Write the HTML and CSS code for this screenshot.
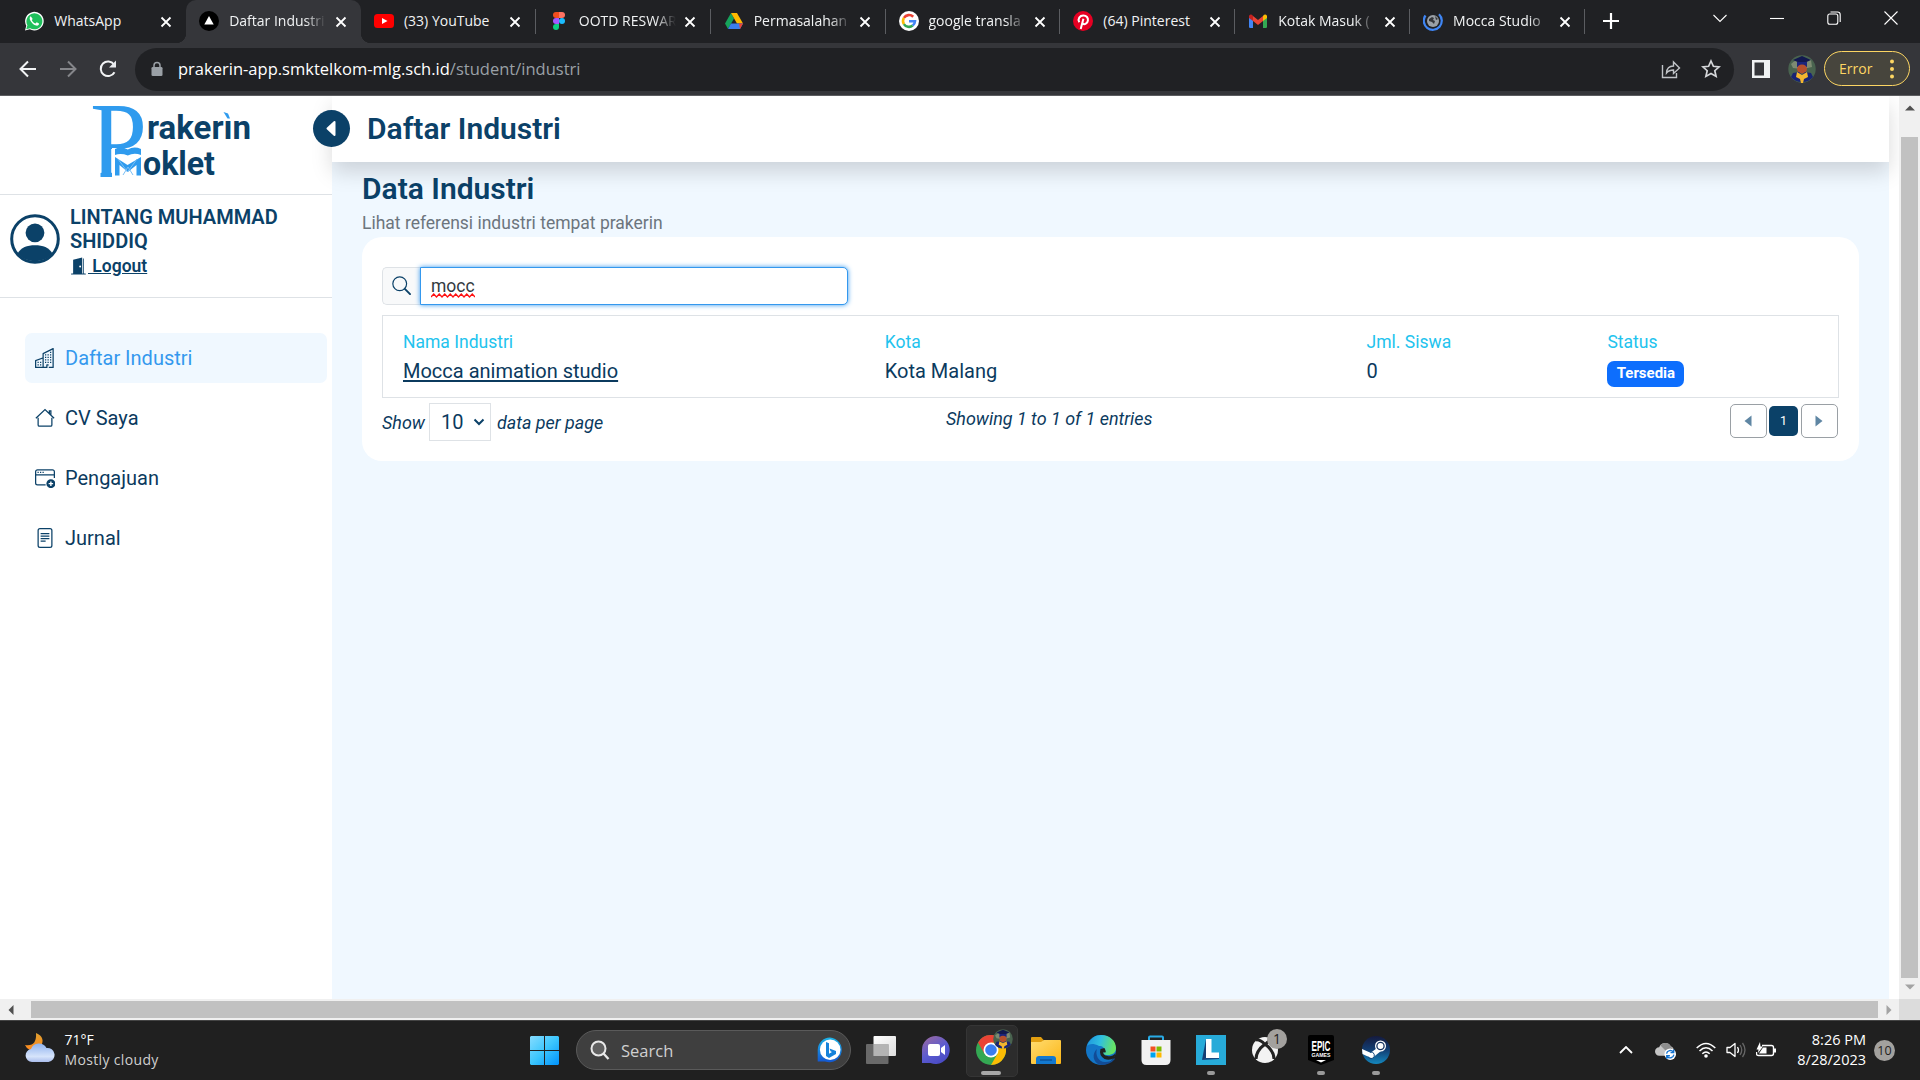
FILE: index.html
```html
<!DOCTYPE html>
<html lang="id">
<head>
<meta charset="utf-8">
<title>Daftar Industri</title>
<link rel="stylesheet" href="styles.css">
</head>
<body>
<div class="screen">

<header class="tabstrip">
  <div class="tab">
    <svg class="fav" viewBox="0 0 20 20"><path d="M1 19.5l1.3-4.8A9.3 9.3 0 1 1 5.800 18.200z" fill="#fff"/><path d="M2.200 18.300l1.200-4A8 8 0 1 1 6.200 17.200z" fill="#20c05c"/><path d="M6.800 5.200c-1.500.8-1.400 2.700-.2 4.700 1.400 2.300 3.200 4 5.600 4.700 1.600.4 2.900-.6 2.800-2.100l-2.300-1.200-1.200 1.300c-1.700-.6-3-1.900-3.700-3.500l.9-1.200z" fill="#fff"/></svg>
    <span class="tab-title">WhatsApp</span><svg class="x" viewBox="0 0 12 12"><path d="M1.500 1.500l9 9M10.500 1.500l-9 9"/></svg>
  </div>
  <div class="tab active">
    <svg class="fav" viewBox="0 0 20 20"><circle cx="10" cy="10" r="10" fill="#000"/><path d="M10 5l4.700 8.500H5.300z" fill="#fff"/></svg>
    <span class="tab-title">Daftar Industri</span><svg class="x" viewBox="0 0 12 12"><path d="M1.500 1.500l9 9M10.500 1.500l-9 9"/></svg>
  </div>
  <div class="tab sep">
    <svg class="fav" viewBox="0 0 20 20"><rect y="3" width="20" height="14" rx="3.500" fill="#f00"/><path d="M8 7l5.500 3L8 13z" fill="#fff"/></svg>
    <span class="tab-title">(33) YouTube</span><svg class="x" viewBox="0 0 12 12"><path d="M1.500 1.500l9 9M10.500 1.500l-9 9"/></svg>
  </div>
  <div class="tab sep">
    <svg class="fav" viewBox="0 0 20 20"><path d="M10 1H7a3 3 0 0 0 0 6h3z" fill="#f24e1e"/><path d="M10 1h3a3 3 0 0 1 0 6h-3z" fill="#ff7262"/><path d="M10 7H7a3 3 0 0 0 0 6h3z" fill="#a259ff"/><circle cx="13" cy="10" r="3" fill="#1abcfe"/><path d="M10 13H7a3 3 0 1 0 3 3z" fill="#0acf83"/></svg>
    <span class="tab-title">OOTD RESWAR</span><svg class="x" viewBox="0 0 12 12"><path d="M1.500 1.500l9 9M10.500 1.500l-9 9"/></svg>
  </div>
  <div class="tab sep">
    <svg class="fav" viewBox="0 0 20 20"><path d="M7 2L1 12.500 4 18l6-10.500z" fill="#16a35b"/><path d="M7 2h6l6 10.500h-6z" fill="#ffba00"/><path d="M4 18l3-5.500h12L16 18z" fill="#3b7ded"/><path d="M15 12.500h4L16 18z" fill="#ea4335"/></svg>
    <span class="tab-title">Permasalahan</span><svg class="x" viewBox="0 0 12 12"><path d="M1.500 1.500l9 9M10.500 1.500l-9 9"/></svg>
  </div>
  <div class="tab sep">
    <svg class="fav" viewBox="0 0 20 20"><circle cx="10" cy="10" r="10" fill="#fff"/><g fill="none" stroke-width="2.600"><path d="M14.200 5.800A6 6 0 0 0 4.900 6.900" stroke="#ea4335"/><path d="M4.900 6.900a6 6 0 0 0 0 6.200" stroke="#fbbc05"/><path d="M4.900 13.100a6 6 0 0 0 8.800 1.500" stroke="#34a853"/><path d="M10 10.200h6a6 6 0 0 1-2.300 4.400" stroke="#4285f4"/></g></svg>
    <span class="tab-title">google transla</span><svg class="x" viewBox="0 0 12 12"><path d="M1.500 1.500l9 9M10.500 1.500l-9 9"/></svg>
  </div>
  <div class="tab sep">
    <svg class="fav" viewBox="0 0 20 20"><circle cx="10" cy="10" r="10" fill="#e60023"/><path d="M6.300 11.200C4.300 7.800 6.800 4.600 10.300 4.600c3.300 0 5 2.200 4.600 4.900-.4 2.900-3.400 4.800-5.300 2.800M10.400 7.700L7.700 18" fill="none" stroke="#fff" stroke-width="2"/></svg>
    <span class="tab-title">(64) Pinterest</span><svg class="x" viewBox="0 0 12 12"><path d="M1.500 1.500l9 9M10.500 1.500l-9 9"/></svg>
  </div>
  <div class="tab sep">
    <svg class="fav" viewBox="0 0 20 20"><path d="M1 5h4v12H2.200Q1 17 1 16z" fill="#4285f4"/><path d="M15 5h4v11q0 1-1.200 1H15z" fill="#34a853"/><path d="M5 5l5 4 5-4v5l-5 4-5-4z" fill="#ea4335"/><path d="M1 5q.5-2.300 3-1.200L5 5v5L1 7z" fill="#c5221f"/><path d="M19 5q-.5-2.300-3-1.200L15 5v5l4-3z" fill="#fbbc04"/></svg>
    <span class="tab-title">Kotak Masuk (</span><svg class="x" viewBox="0 0 12 12"><path d="M1.500 1.500l9 9M10.500 1.500l-9 9"/></svg>
  </div>
  <div class="tab sep">
    <svg class="fav" viewBox="0 0 20 20"><circle cx="10" cy="10" r="6" fill="#9aa0a6"/><path d="M6 8l3-2 2 1-1 2 2 1-1 3-2-2-3-1zM12 5l3 3-2 1z" fill="#34363a"/><path d="M2.500 4.500A9 9 0 1 0 16 3.300" fill="none" stroke="#3f86f5" stroke-width="2.200"/></svg>
    <span class="tab-title">Mocca Studio</span><svg class="x" viewBox="0 0 12 12"><path d="M1.500 1.500l9 9M10.500 1.500l-9 9"/></svg>
  </div>
  <svg class="newtab" viewBox="0 0 16 16"><path d="M8 0v16M0 8h16" stroke="#fff" stroke-width="2.200"/></svg>
  <div class="winctl">
    <svg viewBox="0 0 14 14"><path d="M.5 4L7 10.500 13.500 4"/></svg>
    <svg viewBox="0 0 14 14"><path d="M0 7.500h14"/></svg>
    <svg viewBox="0 0 14 14"><rect x=".8" y="3" width="10" height="10.200" rx="2"/><path d="M3.500 1h7q2.700 0 2.700 2.700V11"/></svg>
    <svg viewBox="0 0 14 14"><path d="M.5.500l13 13M13.500.500l-13 13"/></svg>
  </div>
</header>

<div class="toolbar">
  <div class="navbtns">
    <svg viewBox="0 0 20 20"><path d="M18 10H3M10 2.500L2.500 10l7.500 7.500"/></svg>
    <svg class="dim" viewBox="0 0 20 20"><path d="M2 10h15M10 2.500l7.500 7.500-7.500 7.500"/></svg>
    <svg viewBox="0 0 20 20"><path d="M16.500 13.200A7.300 7.300 0 1 1 16 5.500"/><path d="M18 1.500v7h-7z" fill="#e8eaed" stroke="none"/></svg>
  </div>
  <div class="omnibox">
    <svg class="lock" viewBox="0 0 12 15"><rect x=".5" y="5.500" width="11" height="9" rx="1.300" fill="#9aa0a6"/><path d="M3 6V4a3 3 0 0 1 6 0v2" fill="none" stroke="#9aa0a6" stroke-width="1.500"/></svg>
    <span class="url">prakerin-app.smktelkom-mlg.sch.id<span>/student/industri</span></span>
    <svg class="ob" viewBox="0 0 20 20"><path d="M1.500 6v12.500h14V14M5.500 14c.3-5 3-7 7-7V3l6 6-6 5.500V11c-3 0-5 .5-7 3z" fill="none" stroke="#c0c3c7" stroke-width="1.400"/></svg>
    <svg class="ob" viewBox="0 0 20 20"><path d="M10 2l2.400 5.300 5.700.6-4.300 3.800 1.300 5.700L10 14.500l-5.100 2.900 1.300-5.700L1.900 7.900l5.700-.6z" fill="none" stroke="#d5d7da" stroke-width="1.700"/></svg>
  </div>
  <svg class="panel" viewBox="0 0 18 18"><path fill-rule="evenodd" d="M0 0h18v18H0zM2.500 2.500v13H12v-13z" fill="#f1f3f4"/></svg>
  <svg class="avatar" viewBox="0 0 28 28"><use href="#grad"/></svg>
  <div class="error"><span>Error</span><svg viewBox="0 0 4 20"><g fill="#fdd663"><circle cx="2" cy="2.500" r="2"/><circle cx="2" cy="10" r="2"/><circle cx="2" cy="17.500" r="2"/></g></svg></div>
</div>

<div class="viewport">
  <aside class="sidebar">
    <div class="brand">
      <svg viewBox="0 0 160 74">
        <defs><clipPath id="stem"><path d="M0-2h62v46H21v29H9.500V30H0z"/></clipPath></defs>
        <g clip-path="url(#stem)"><text class="bigp" x="-1" y="73" textLength="57" lengthAdjust="spacingAndGlyphs">P</text></g>
        <path d="M24 45q6.500-3 12.800.5Q43 42 50 45v6q-7-2.500-13.200.5Q30 49 24 51z" fill="#2f9bee"/>
        <path d="M24 53l12.500 8L50 53v18.500h-4.500V61l-8.700 7-8.300-7v10.500H24z" fill="#2f9bee"/>
        <path d="M27 55l9.500 13M46 55l-9.500 13M32 71l5-8 5 8" stroke="#7cc0f5" fill="none"/>
        <text class="lw" x="56" y="35" textLength="104" lengthAdjust="spacingAndGlyphs">rakerın</text>
        <path d="M132.500 8l4.500 1.500 2 5h-2.500z" fill="#2f9bee"/>
        <text class="lw" x="52" y="71" textLength="72" lengthAdjust="spacingAndGlyphs">oklet</text>
      </svg>
    </div>
    <div class="user">
      <svg class="person" viewBox="0 0 50 50"><circle cx="25" cy="25" r="23.300" fill="#fff" stroke="#0b4168" stroke-width="3"/><circle cx="25" cy="18.800" r="9.400" fill="#0b4168"/><path d="M7.500 39.500C11 33.500 17 31.300 25 31.300s14 2.200 17.500 8.200A23.500 23.500 0 0 1 7.500 39.500z" fill="#0b4168"/></svg>
      <div class="who">
        <b>LINTANG MUHAMMAD SHIDDIQ</b>
        <a><svg viewBox="0 0 16 16"><path d="M12 1v14h1.500a.5.5 0 0 1 0 1h-13a.5.5 0 0 1 0-1H2V2.200L10.500 0v15h.700V1z"/><circle cx="8.600" cy="8.500" r=".9" fill="#fff"/></svg>&nbsp;Logout</a>
      </div>
    </div>
    <nav>
      <a class="on"><svg viewBox="0 0 16 16"><path fill-rule="evenodd" d="M14.760.070A.5.500 0 0 1 15 .5v15a.5.500 0 0 1-.5.500h-3a.5.500 0 0 1-.5-.5V14h-1v1.500a.5.500 0 0 1-.5.500h-9a.5.500 0 0 1-.5-.5V10a.5.500 0 0 1 .340-.470L6 7.640V4.500a.5.500 0 0 1 .280-.450l8-4a.5.500 0 0 1 .480.020zM6 8.690l-5 1.670V15h5V8.690zM7 15h2v-1.500a.5.500 0 0 1 .5-.5h1a.5.500 0 0 1 .5.500V15h3V1.300L7 4.800V15z"/><path d="M2 11h1v1H2zm2 0h1v1H4zm-2 2h1v1H2zm2 0h1v1H4zm4-4h1v1H8zm2 0h1v1h-1zm-2 2h1v1H8zm2 0h1v1h-1zm2-2h1v1h-1zm0 2h1v1h-1zM8 7h1v1H8zm2 0h1v1h-1zm2 0h1v1h-1zM8 5h1v1H8zm2 0h1v1h-1zm2 0h1v1h-1zm0-2h1v1h-1z"/></svg>Daftar Industri</a>
      <a><svg viewBox="0 0 16 16"><path d="M2.500 7.800v5.700a1 1 0 0 0 1 1h9a1 1 0 0 0 1-1V7.800M.7 8.200L8 1.200l7.300 7M11.500 4.300V2.300h1.200v3.400" fill="none" stroke="#0b4168"/></svg>CV Saya</a>
      <a><svg viewBox="0 0 16 16"><path d="M8.500 13.500H2a1.500 1.500 0 0 1-1.500-1.500V3A1.500 1.500 0 0 1 2 1.500h12A1.500 1.500 0 0 1 15.500 3v5M.5 5.500h15" fill="none" stroke="#0b4168"/><path d="M2 3h1v1H2zM4 3h1v1H4zM6 3h1v1H6z"/><circle cx="12.700" cy="12.500" r="3.600"/><path d="M12.700 10.700v3.600M10.900 12.500h3.600" stroke="#fff" stroke-width="1.100"/></svg>Pengajuan</a>
      <a><svg viewBox="0 0 16 16"><rect x="2.500" y=".5" width="11" height="15" rx="1.500" fill="none" stroke="#0b4168"/><path d="M4.500 4.500h7M4.500 6.500h7M4.500 8.500h7M4.500 10.500h4" stroke="#0b4168"/></svg>Jurnal</a>
    </nav>
  </aside>
  <main>
    <div class="pagehead">
      <span class="collapse"><svg viewBox="0 0 10 16"><path d="M8.500 1.500v13L1.500 8z" fill="#fff" stroke="#fff" stroke-width="2" stroke-linejoin="round"/></svg></span>
      <h1>Daftar Industri</h1>
    </div>
    <div class="content">
      <h2>Data Industri</h2>
      <p class="sub">Lihat referensi industri tempat prakerin</p>
      <section class="card">
        <div class="search">
          <span class="addon"><svg viewBox="0 0 16 16"><circle cx="6.500" cy="6.500" r="5.800" fill="none" stroke="#0b4168"/><path d="M10.800 10.800l4.400 4.400" stroke="#0b4168" stroke-width="1.600" stroke-linecap="round"/></svg></span>
          <div class="field"><span>mocc<svg viewBox="0 0 44 5"><path d="M0 4l2.750-3 2.750 3 2.750-3 2.750 3 2.750-3 2.750 3 2.750-3 2.750 3 2.750-3 2.750 3 2.750-3 2.750 3 2.750-3 2.750 3 2.750-3 2.750 3" fill="none" stroke="#f11" stroke-width="1.300"/></svg></span></div>
        </div>
        <div class="row">
          <div class="wide"><small>Nama Industri</small><u>Mocca animation studio</u></div>
          <div class="wide"><small>Kota</small><span>Kota Malang</span></div>
          <div><small>Jml. Siswa</small><span>0</span></div>
          <div><small>Status</small><strong>Tersedia</strong></div>
        </div>
        <div class="foot">
          <div class="perpage"><i>Show</i><span class="select">10<svg viewBox="0 0 12 8"><path d="M1.500 1.500L6 6l4.500-4.500" fill="none" stroke="#0b4168" stroke-width="2"/></svg></span><i>data per page</i></div>
          <i class="showing">Showing 1 to 1 of 1 entries</i>
          <div class="pager"><span class="pg"><svg viewBox="0 0 8 12"><path d="M7.500.500v11L.5 6z" fill="#5f86a3"/></svg></span><span class="cur">1</span><span class="pg"><svg viewBox="0 0 8 12"><path d="M.5.500v11l7-5.500z" fill="#5f86a3"/></svg></span></div>
        </div>
      </section>
    </div>
  </main>
  <div class="vscroll"><svg viewBox="0 0 10 6"><path d="M0 5.500h10L5 .5z" fill="#505050"/></svg><div class="vthumb"></div><svg viewBox="0 0 10 6"><path d="M0 .5h10L5 5.500z" fill="#a3a3a3"/></svg></div>
</div>
<div class="hscroll"><svg viewBox="0 0 6 10"><path d="M5.500 0v10L.5 5z" fill="#505050"/></svg><div class="hthumb"></div><svg viewBox="0 0 6 10"><path d="M.5 0v10l5-5z" fill="#a3a3a3"/></svg><div class="corner"></div></div>

<footer class="taskbar">
  <div class="weather">
    <svg viewBox="0 0 30 30"><defs><linearGradient id="cl" x2="0" y2="1"><stop stop-color="#8fb2ee"/><stop offset=".7" stop-color="#d6e4fb"/><stop offset="1" stop-color="#aabdec"/></linearGradient><linearGradient id="mn" x2="0" y2="1"><stop stop-color="#e0a030"/><stop offset="1" stop-color="#ff8a1e"/></linearGradient></defs><path d="M11 0c7 3 8 8 5 13l-11 4q-4-2-5-5 12 2 11-12z" fill="url(#mn)"/><path d="M7 29a6.500 6.500 0 0 1-1-12.900A8.500 8.500 0 0 1 21.500 15 7 7 0 0 1 23.500 29z" fill="url(#cl)"/></svg>
    <div><span>71°F</span><span class="mc">Mostly cloudy</span></div>
  </div>
  <div class="dock">
    <svg class="start" viewBox="0 0 29 29"><defs><linearGradient id="st" x2="1" y2="1"><stop stop-color="#86dcff"/><stop offset=".5" stop-color="#3cc6fd"/><stop offset="1" stop-color="#0092fc"/></linearGradient></defs><path d="M1 0h13v14H0V1zM15 0h13l1 1v13H15zM0 15h14v14H1l-1-1zM15 15h14v13l-1 1H15z" fill="url(#st)"/></svg>
    <div class="tsearch"><svg class="mag" viewBox="0 0 20 20"><circle cx="8.500" cy="8.500" r="7" fill="#606060" stroke="#e8e8e8" stroke-width="2"/><path d="M13.500 13.500L18.500 19" stroke="#e8e8e8" stroke-width="2.300"/></svg><span>Search</span>
      <svg class="bing" viewBox="0 0 26 26"><defs><linearGradient id="bg" x2="0" y2="1"><stop stop-color="#1cb4e8"/><stop offset="1" stop-color="#1456cf"/></linearGradient></defs><path d="M13 .5a12.400 12.400 0 1 1-5 24H.7V13A12.400 12.400 0 0 1 13 .5z" fill="url(#bg)"/><circle cx="13.200" cy="12.800" r="10.300" fill="#fff"/><path d="M9 5l3 1.200v10.500l3-1.600-1.500-.8-1-2.900 6.500 2.600v3L12 21l-3-2z" fill="#1682da"/></svg>
    </div>
    <div class="apps">
      <span><svg viewBox="0 0 30 30"><defs><linearGradient id="tv" x2="1" y2="1"><stop stop-color="#fff"/><stop offset="1" stop-color="#ddd"/></linearGradient></defs><rect x="7.500" y="1" width="22.500" height="20" rx="1" fill="url(#tv)"/><rect x="0" y="9" width="22.500" height="20" rx="1" fill="#777" opacity=".85"/><rect x="7.500" y="9" width="15" height="12" fill="#b4b4b4"/></svg></span>
      <span><svg viewBox="0 0 30 30"><defs><linearGradient id="ch" x2=".6" y2="1"><stop stop-color="#a06a9c"/><stop offset=".6" stop-color="#5b5bd0"/><stop offset="1" stop-color="#4a4bc4"/></linearGradient></defs><path d="M15 1a14 14 0 1 1-5.500 27H1V15A14 14 0 0 1 15 1z" fill="url(#ch)"/><rect x="7" y="9" width="12" height="12" rx="2" fill="#fff"/><path d="M20 13l4-3v10l-4-3z" fill="#fff"/></svg></span>
      <span class="tile run"><svg viewBox="0 0 30 30"><circle cx="15" cy="15" r="15" fill="#34a853"/><path d="M15 15L2 7.500A15 15 0 0 1 28 7.500z" fill="#ea4335"/><path d="M15 7.500h13A15 15 0 0 1 15 30l6.500-11.200z" fill="#fbbc04"/><path d="M2 7.500L8.500 18.800 15 8z" fill="#ea4335"/><circle cx="15" cy="15" r="7.500" fill="#fff"/><circle cx="15" cy="15" r="5.800" fill="#3b7df0"/></svg><svg class="mini" viewBox="0 0 28 28"><g id="grad"><circle cx="14" cy="14" r="13.700" fill="#49634f"/><path d="M3 9q7-7 20-4l1 7q-9 3-19 1z" fill="#7d8b72"/><path d="M5 5l9-4 9 4-9 4z" fill="#12194f"/><path d="M9 7h10v5q-5-2-10 0z" fill="#1b247c"/><ellipse cx="14" cy="14" rx="5" ry="4.500" fill="#b5502d"/><path d="M5 18l6-1 3 3 3-3 6 1 2 4q-4 5-11 5T3 22z" fill="#192473"/><path d="M9 17l5 3 5-3 1 5-4 2-1 4h-2l-1-4-4-2z" fill="#f4b62e"/></g></svg></span>
      <span><svg viewBox="0 0 30 30"><defs><linearGradient id="fo" x2="1" y2="1"><stop stop-color="#ffdc70"/><stop offset="1" stop-color="#fcb616"/></linearGradient></defs><path d="M0 3q0-1 1-1h9l3 3.500L10 9H0z" fill="#e29f10"/><path d="M0 7h10l3-2h16q1 0 1 1v22q0 1-1 1H1q-1 0-1-1z" fill="url(#fo)"/><path d="M5 29v-5q0-3 3-3h14q3 0 3 3v5z" fill="#1379d0"/><path d="M9 25h12" stroke="#0c4c93" stroke-width="1.300"/></svg></span>
      <span><svg viewBox="0 0 30 30"><defs><linearGradient id="e1" x2="1" y2=".2"><stop stop-color="#1d93de"/><stop offset=".5" stop-color="#30bfe0"/><stop offset="1" stop-color="#66e366"/></linearGradient></defs><circle cx="15" cy="15" r="15" fill="#1376c7"/><path d="M1 11C4 3 10 0 15 0c9 0 15 6 15 13 0 5-4 7-8 7-5 0-6-2-4-4 1-3-1-5-5-5C7 8 3 9 1 11z" fill="url(#e1)"/><path d="M11 14c-2 5 1 13 8 13 4 0 7-1 9-4l1 1q-5 6-14 6C6 28 6 18 11 14z" fill="#124c96"/><path d="M18.500 13q3 6-1 4-1 3 4 4 5 1 8-3l-1 5q-5 3-10 1-6-4-4-10z" fill="#202020"/></svg></span>
      <span><svg viewBox="0 0 30 30"><path d="M8 7V2.500Q8 1.500 9 1.500h12q1 0 1 1V7" fill="none" stroke="#28abe6" stroke-width="2"/><path d="M.5 5h29v20q0 5-5 5h-19q-5 0-5-5z" fill="#f2f2f2"/><path d="M9.500 11.500h5v5h-5z" fill="#f25022"/><path d="M15.500 11.500h5v5h-5z" fill="#7fba00"/><path d="M9.500 17.500h5v5h-5z" fill="#00a4ef"/><path d="M15.500 17.500h5v5h-5z" fill="#ffb900"/></svg></span>
      <span class="dot"><svg viewBox="0 0 30 30"><path d="M0 0h30v30H0z" fill="#27abd9"/><path d="M10 4L6 25l5-2z" fill="#153e73"/><path d="M6 25l5-3.500h12V24z" fill="#174a82"/><path d="M10 4h5.500v13.500H23v5.500H10z" fill="#fff"/></svg></span>
      <span><svg viewBox="0 0 30 30"><circle cx="14" cy="15" r="13" fill="#f3f3f3"/><path d="M4.500 5q4-1 9.500 4.500Q19.500 4 23.500 5M14 9Q5 16 5 24M14 9q9 7 9 15" fill="none" stroke="#222" stroke-width="3"/></svg><em>1</em></span>
      <span class="dot"><svg viewBox="0 0 30 30"><path d="M4 0h22q2 0 2 2v23l-13 5-13-5V2q0-2 2-2z" fill="#000"/><text x="5.500" y="15.500" textLength="19" lengthAdjust="spacingAndGlyphs" class="epic">EPIC</text><text x="5.500" y="22" textLength="19" lengthAdjust="spacingAndGlyphs" class="games">GAMES</text><path d="M10 25h10l-5 2.500z" fill="#fff"/></svg></span>
      <span class="dot"><svg viewBox="0 0 30 30"><defs><linearGradient id="sm" x2="0" y2="1"><stop stop-color="#151a3e"/><stop offset=".5" stop-color="#123e73"/><stop offset="1" stop-color="#1488bf"/></linearGradient></defs><circle cx="15" cy="15" r="14" fill="url(#sm)"/><path d="M1 14l8.500 3.700 5-3.500L17 9l5.500 5-7.500 6-4 3.500L1.500 19z" fill="#fff"/><circle cx="19.500" cy="11" r="5.500" fill="#fff"/><circle cx="19.500" cy="11" r="3.600" fill="none" stroke="#14315f" stroke-width="1.300"/><path d="M7 21.500a3.300 3.300 0 1 0 2-4.300" fill="none" stroke="#164b80"/></svg></span>
    </div>
  </div>
  <div class="tray">
    <svg class="up" viewBox="0 0 14 8"><path d="M1 7l6-6 6 6" fill="none" stroke="#fff" stroke-width="1.800"/></svg>
    <svg class="od" viewBox="0 0 20 18"><path d="M4 14a4 4 0 0 1 0-8 6 6 0 0 1 11-1q3 1 3 5v4z" fill="#c5c5c5"/><path d="M5 4a6 6 0 0 1 10 1l2 3-7 1z" fill="#8d8d8d"/><circle cx="14.500" cy="12.500" r="5.500" fill="#fff"/><path d="M11 12a3.600 3.600 0 0 1 6.500-1.500M18 13a3.600 3.600 0 0 1-6.500 1.500M17.800 8v3h-3M11.200 17v-3h3" fill="none" stroke="#1272d0" stroke-width="1.300"/></svg>
    <svg class="wifi" viewBox="0 0 20 16"><g fill="none" stroke="#fff" stroke-width="1.500"><path d="M.7 6q9.300-9 18.600 0M3.500 9q6.500-6.500 13 0M6.300 11.800q3.700-3.600 7.400 0"/></g><circle cx="10" cy="14" r="1.800" fill="#fff"/></svg>
    <svg class="vol" viewBox="0 0 20 16"><path d="M1 5.500h3l5-4v13l-5-4H1z" fill="none" stroke="#fff" stroke-width="1.300" stroke-linejoin="round"/><path d="M11.500 5q2 3 0 6" fill="none" stroke="#fff" stroke-width="1.300"/><path d="M14 3q3.500 5 0 10M16.500 1q5 7 0 14" fill="none" stroke="#666" stroke-width="1.300"/></svg>
    <svg class="bat" viewBox="0 0 20 16"><path d="M6 3.500h9.500q2 0 2 2v6q0 2-2 2h-13q-2 0-2-2V10" fill="none" stroke="#fff" stroke-width="1.400"/><path d="M3 11.500h7.500V5.500H7zM18 6.500h2v4h-2z" fill="#fff"/><path d="M4 0L.5 7.500h2L2 11l5-6.500H4.500z" fill="#fff"/></svg>
    <div class="clock"><span>8:26 PM</span><span>8/28/2023</span></div>
    <b class="count">10</b>
  </div>
</footer>
</div>
</body>
</html>
```
FILE: styles.css
```css
* { box-sizing: border-box; }
body { margin: 0; background: #202124; font-family: "Open Sans", sans-serif; }
svg { display: block; flex: none; }
.screen { width: 1920px; height: 1080px; display: flex; flex-direction: column; overflow: hidden; }

/* browser tabs */
.tabstrip { height: 43px; flex: none; display: flex; padding-left: 11.3px; background: #202124; color: #f1f3f4; }
.tab { position: relative; width: 174.85px; flex: none; height: 43px; padding: 0 14px 1px 13px; display: flex; align-items: center; font-size: 14px; }
.fav { width: 20px; height: 20px; }
.tab-title { margin-left: 10px; width: 97px; white-space: nowrap; line-height: 20px; -webkit-mask-image: linear-gradient(90deg, #000 76px, transparent 97px); mask-image: linear-gradient(90deg, #000 76px, transparent 97px); }
.tab:nth-child(1) .tab-title, .tab:nth-child(3) .tab-title, .tab:nth-child(7) .tab-title { -webkit-mask-image: none; mask-image: none; }
.x { width: 12px; height: 12px; margin-left: 8.5px; margin-top: 1px; }
.x path { stroke: #fff; stroke-width: 1.8; }
.tab.active { background: #35363a; border-radius: 10px 10px 0 0; }
.tab.active::before, .tab.active::after { content: ""; position: absolute; bottom: 0; width: 10px; height: 10px; }
.tab.active::before { left: -10px; background: radial-gradient(circle at 0 0, transparent 10px, #35363a 10.5px); }
.tab.active::after { right: -10px; background: radial-gradient(circle at 100% 0, transparent 10px, #35363a 10.5px); }
.tab.sep::after { content: ""; position: absolute; right: 0; top: 9px; width: 1px; height: 25px; background: #5b5d61; }
.newtab { width: 16px; height: 16px; margin: 13px 0 0 18px; }
.winctl { display: flex; gap: 43px; margin: 11px 0 0 auto; padding-right: 22px; }
.winctl svg { width: 14px; height: 14px; fill: none; stroke: #fff; stroke-width: 1.1; }

/* address bar */
.toolbar { height: 53px; flex: none; display: flex; align-items: center; background: #35363a; border-bottom: 1px solid #5c5d60; padding: 0 10px 1px 18px; }
.navbtns { display: flex; gap: 20px; width: 117px; }
.navbtns svg { width: 20px; height: 20px; fill: none; stroke: #f1f3f4; stroke-width: 2; }
.navbtns .dim { stroke: #85868a; }
.omnibox { width: 1599px; height: 43px; margin-top: 1px; border-radius: 22px; background: #202124; display: flex; align-items: center; padding: 0 13px 1px 16px; }
.lock { width: 12px; height: 16px; }
.url { margin-left: 15px; flex: 1; color: #fff; font-size: 16.5px; letter-spacing: .01px; white-space: nowrap; }
.url span { color: #9aa0a6; }
.ob { width: 20px; height: 20px; margin-left: 20px; }
.panel { width: 18px; height: 18px; margin-left: 18px; }
.avatar { width: 28px; height: 28px; margin-left: 18px; }
.error { width: 86px; height: 35px; margin-left: auto; border: 1.5px solid #fdd663; border-radius: 18px; background: #47453d; display: flex; align-items: center; justify-content: space-between; padding: 0 15px 0 14px; color: #fdd663; font-size: 14px; }
.error svg { width: 4px; height: 20px; }

/* page */
.viewport { height: 903px; flex: none; display: flex; overflow: hidden; background: #fff; font-family: Roboto, sans-serif; color: #0b3a5e; }
.sidebar { width: 332px; flex: none; }
.brand { height: 99px; padding: 8px 0 0 91px; border-bottom: 1px solid #dee2e6; }
.brand svg { width: 160px; height: 74px; overflow: visible; }
.bigp { font: 109px "Liberation Serif", serif; fill: #2f9bee; }
.lw { font: bold 33px Roboto, sans-serif; fill: #0b4168; }
.user { height: 103px; border-bottom: 1px solid #dee2e6; padding: 10px 10px 0; display: flex; }
.person { width: 50px; height: 50px; margin-top: 9px; }
.who { margin-left: 10px; line-height: 24px; font-size: 20px; color: #0b4168; display: flex; flex-direction: column; }
.who b { width: 220px; font-weight: 600; }
.who a { display: flex; align-items: center; margin: 1px 0 0 1px; font-size: 17.5px; font-weight: 600; text-decoration: underline; }
.who svg { width: 17px; height: 18px; fill: #0b4168; }
nav { padding: 35px 5px 0 25px; display: flex; flex-direction: column; gap: 10px; }
nav a { height: 50px; border-radius: 7px; display: flex; align-items: center; padding-left: 10px; gap: 10px; font-size: 20px; }
nav svg { width: 20px; height: 20px; fill: #0b4168; }
nav .on { background: #f0f8ff; color: #3498ee; }
main { width: 1557px; flex: none; background: #f0f8ff; }
.pagehead { position: relative; height: 66px; background: #fff; box-shadow: 0 10px 20px rgba(0,0,0,.15); display: flex; align-items: center; }
.collapse { width: 37px; height: 37px; border-radius: 50%; background: #0b4168; margin: -1px 0 0 -19px; display: flex; align-items: center; justify-content: center; }
.collapse svg { width: 10px; height: 17px; margin-right: 1px; }
h1, h2 { margin: 0; font-size: 30px; font-weight: 600; color: #0b4168; line-height: 36px; }
h1 { margin-left: 17px; }
.content { padding: 8px 30px 0; }
h2 { margin-top: 1px; }
.sub { margin: 3px 0 0; font-size: 17.5px; line-height: 26px; color: #6c757d; }
.card { margin-top: 1px; height: 224px; background: #fff; border-radius: 20px; padding: 30px 20px 0; }
.search { display: flex; height: 38px; }
.addon { width: 38px; border: 1px solid #dee2e6; border-right: 0; background: #f8f9fa; border-radius: 5px 0 0 5px; display: flex; align-items: center; padding-left: 9px; }
.addon svg { width: 19px; height: 19px; margin-top: -2px; }
.field { width: 428px; border: 1.5px solid #3498ee; border-radius: 0 5px 5px 0; box-shadow: 0 0 5px #3498ee; color: #333a42; font-size: 17.5px; line-height: 36px; padding-left: 10px; background: #fff; }
.field span { position: relative; display: inline-block; }
.field svg { position: absolute; left: 0; top: 25px; width: 44px; height: 5px; }
.row { display: flex; height: 83px; margin-top: 10px; border: 1px solid #dee2e6; padding: 13px 0 0 20px; font-size: 20px; }
.row > div { flex: none; width: 240.8px; display: flex; flex-direction: column; align-items: flex-start; line-height: 30px; }
.row > .wide { width: 481.8px; }
.row > div:last-child { width: 200px; }
small { font-size: 17.5px; line-height: 27px; color: #22c3ee; }
u { text-underline-offset: 2px; text-decoration-thickness: 1.5px; }
strong { margin-top: 5px; width: 77px; height: 26px; border-radius: 7px; background: #0d6efd; color: #fff; font-size: 15px; line-height: 25px; text-align: center; }
.foot { display: grid; grid-template-columns: 564px 1fr auto; padding-top: 5px; font-size: 17.95px; }
.perpage { display: flex; align-items: center; height: 38px; }
.perpage i { margin-top: 1px; }
.select { width: 62px; height: 38px; margin: 0 6px 0 4px; border: 1px solid #dee2e6; display: flex; align-items: center; gap: 10px; padding-left: 11px; font-size: 20px; }
.select svg { width: 12px; height: 8px; }
.showing { line-height: 32px; }
.pager { display: flex; align-items: center; height: 36px; padding-right: 1px; }
.pg { width: 37px; height: 34px; border: 1px solid #9aa0a5; border-radius: 5px; display: flex; align-items: center; justify-content: center; }
.pg svg { width: 8px; height: 12px; margin: -1px 1px 0 0; }
.cur { width: 29px; height: 30px; margin: 0 3px 0 2px; background: #0b4168; color: #fff; border-radius: 5px; font-size: 12.5px; line-height: 29px; text-align: center; }

/* scrollbars */
.vscroll { position: relative; width: 21px; margin-left: auto; background: #f0f0f0; display: flex; flex-direction: column; align-items: center; padding-top: 9px; }
.vscroll svg { width: 10px; height: 6px; }
.vthumb { width: 17px; height: 841px; margin: 26px 0 6px; background: #c1c1c1; }
.hscroll { height: 21px; flex: none; display: flex; align-items: center; background: #f0f0f0; padding-left: 8px; }
.hscroll svg { width: 6px; height: 10px; }
.hthumb { width: 1847px; height: 17px; margin: 0 8px 0 17px; background: #c1c1c1; }
.corner { width: 21px; height: 21px; margin-left: auto; background: #dcdcdc; }

/* taskbar */
.taskbar { height: 60px; flex: none; display: flex; background: #202020; border-top: 1px solid #444; color: #fff; }
.weather { display: flex; width: 530px; padding: 9px 0 0 25px; font-size: 14px; line-height: 20px; }
.weather > svg { width: 30px; height: 30px; margin-top: 3px; }
.weather div { display: flex; flex-direction: column; margin-left: 9.5px; }
.mc { color: #cfcfcf; letter-spacing: .35px; }
.dock { display: flex; align-items: center; height: 58px; }
.start { width: 29px; height: 29px; }
.tsearch { width: 275px; height: 40px; margin-left: 17px; border: 1px solid #5a5a5a; border-radius: 20px; background: #3f3f3f; display: flex; align-items: center; padding: 0 7px 0 13px; color: #d0d0d0; font-size: 16.5px; }
.mag { width: 20px; height: 20px; margin-right: 11px; }
.bing { width: 26px; height: 26px; margin-left: auto; }
.apps { display: flex; margin-left: 2.5px; }
.apps span { position: relative; width: 55px; height: 58px; display: flex; align-items: center; justify-content: center; }
.apps svg { position: relative; width: 30px; height: 30px; }
.tile::before { content: ""; position: absolute; left: 2.5px; top: 4px; width: 50px; height: 50px; border-radius: 5px; background: #2c2c2c; border: 1px solid #353535; }
.run::after, .dot::after { content: ""; position: absolute; bottom: 4px; left: 23.5px; width: 8px; height: 4px; border-radius: 2px; background: #9a9a9a; }
.run::after { left: 17.5px; width: 20px; background: #a8a8a8; }
.apps .mini { position: absolute; left: 29px; top: 8px; width: 20px; height: 20px; }
em { position: absolute; left: 28.5px; top: 8px; width: 20px; height: 20px; border-radius: 50%; background: #a3a19e; color: #222; font-style: normal; font-size: 14px; line-height: 20px; text-align: center; }
.epic { font: bold 15px "Liberation Sans", sans-serif; fill: #fff; }
.games { font: bold 5.5px "Liberation Sans", sans-serif; fill: #fff; }
.tray { display: flex; align-items: center; height: 58px; margin-left: auto; padding-right: 25px; }
.up { width: 14px; height: 8px; margin-right: 22px; }
.od { width: 21px; height: 19px; margin-right: 20px; }
.wifi { width: 20px; height: 16px; margin-right: 10px; }
.vol { width: 20px; height: 16px; margin-right: 10px; }
.bat { width: 20px; height: 16px; }
.clock { width: 90px; display: flex; flex-direction: column; text-align: right; font-size: 14.5px; line-height: 20px; }
.count { width: 21px; height: 21px; margin-left: 8px; border-radius: 50%; background: #a3a19e; color: #222; font-size: 12.5px; font-weight: 400; line-height: 21px; text-align: center; }
```
